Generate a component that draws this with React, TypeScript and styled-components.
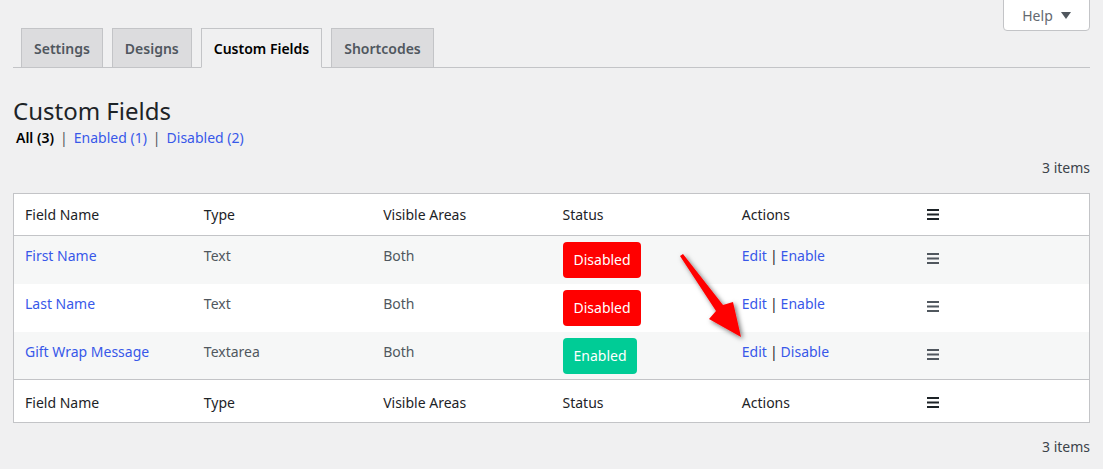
import React from "react";
import styled, { createGlobalStyle } from "styled-components";

const GlobalStyle = createGlobalStyle`
  body {
    margin: 0;
    background: #f0f0f1;
    font-family: "Noto Sans", "Open Sans", sans-serif;
    color: #3c434a;
    font-size: 14px;
  }
`;

const Page = styled.div`
  position: relative;
  padding: 0 13px;
  height: 469px;
  overflow: hidden;
`;

const TopBar = styled.div`
  display: flex;
  justify-content: flex-end;
  height: 28px;
`;

const HelpButton = styled.button`
  height: 32px;
  margin-top: -1px;
  width: 87px;
  background: #fff;
  border: 1px solid #c3c4c7;
  border-radius: 0 0 4px 4px;
  font-family: inherit;
  font-size: 14px;
  color: #646970;
  display: flex;
  align-items: center;
  justify-content: center;
  gap: 8px;
  padding: 0;
`;

const Caret = styled.span`
  display: inline-block;
  width: 0;
  height: 0;
  border-left: 5px solid transparent;
  border-right: 5px solid transparent;
  border-top: 7px solid #50575e;
`;

const TabBar = styled.div`
  display: flex;
  gap: 9px;
  padding-left: 8px;
  border-bottom: 1px solid #c3c4c7;
  height: 39px;
`;

const Tab = styled.div<{ $active?: boolean }>`
  box-sizing: border-box;
  padding: 0 12px;
  display: flex;
  align-items: center;
  font-size: 14px;
  font-weight: 600;
  border: 1px solid #c3c4c7;
  border-bottom: ${({ $active }) => ($active ? "1px solid #f0f0f1" : "none")};
  background: ${({ $active }) => ($active ? "#f0f0f1" : "#dcdcde")};
  color: ${({ $active }) => ($active ? "#000" : "#50575e")};
  height: ${({ $active }) => ($active ? "40px" : "39px")};
`;

const Title = styled.h1`
  margin: 28px 0 0 0;
  font-size: 24px;
  font-weight: 400;
  line-height: 29px;
  color: #1d2327;
`;

const Filters = styled.div`
  margin-top: 4px;
  font-size: 14px;
  line-height: 18px;
  padding-left: 3px;
`;

const FilterLink = styled.a<{ $current?: boolean }>`
  color: ${({ $current }) => ($current ? "#000" : "#3858e9")};
  font-weight: ${({ $current }) => ($current ? 600 : 400)};
  text-decoration: none;
`;

const Sep = styled.span`
  margin: 0 6px;
  color: #50575e;
`;

const Count = styled.div<{ $top: number; $bottom?: number }>`
  text-align: right;
  font-size: 14px;
  line-height: 20px;
  color: #3c434a;
  margin: ${({ $top, $bottom }) => `${$top}px 0 ${$bottom ?? 0}px`};
`;

const Table = styled.table`
  width: 100%;
  border-collapse: collapse;
  table-layout: fixed;
  background: #fff;
  border: 1px solid #c3c4c7;
`;

const HeadCell = styled.th<{ $foot?: boolean }>`
  text-align: left;
  font-weight: 400;
  color: #1d2327;
  font-size: 14px;
  height: ${({ $foot }) => ($foot ? "43px" : "42px")};
  box-sizing: border-box;
  padding: ${({ $foot }) => ($foot ? "2px 11px 0" : "0 11px")};
  vertical-align: middle;
  border-bottom: ${({ $foot }) => ($foot ? "none" : "1px solid #c3c4c7")};
  border-top: ${({ $foot }) => ($foot ? "1px solid #c3c4c7" : "none")};
`;

const Row = styled.tr<{ $striped?: boolean }>`
  background: ${({ $striped }) => ($striped ? "#f6f7f7" : "#fff")};
  height: 48px;
`;

const Cell = styled.td<{ $top?: number }>`
  vertical-align: top;
  padding: ${({ $top }) => `${$top ?? 10}px 11px 0`};
  font-size: 14px;
  line-height: 20px;
  color: #50575e;
`;

const NameLink = styled.a`
  color: #3858e9;
  text-decoration: none;
`;

const Badge = styled.span<{ $on?: boolean }>`
  display: inline-block;
  margin-left: 1px;
  background: ${({ $on }) => ($on ? "#00cc96" : "#ff0000")};
  color: #fff;
  border-radius: 4px;
  padding: 8px 10px;
  line-height: 20px;
  font-size: 14px;
`;

const ActionSep = styled.span`
  color: #1d2327;
  margin: 0 3px;
`;

const Arrow = styled.svg`
  position: absolute;
  left: 0;
  top: 0;
  pointer-events: none;
`;

const MenuSvg = styled.svg`
  display: block;
  margin-left: 6px;
`;

const MenuIcon: React.FC<{ dark?: boolean }> = ({ dark }) => (
  <MenuSvg width="12" height="11" viewBox="0 0 12 11">
    <g fill={dark ? "#1d2327" : "#50575e"}>
      <rect x="0" y="0" width="12" height="2" />
      <rect x="0" y="4.5" width="12" height="2" />
      <rect x="0" y="9" width="12" height="2" />
    </g>
  </MenuSvg>
);

const rows = [
  { name: "First Name", type: "Text", on: false },
  { name: "Last Name", type: "Text", on: false },
  { name: "Gift Wrap Message", type: "Textarea", on: true },
];

const HeaderCells: React.FC<{ foot?: boolean }> = ({ foot }) => (
  <tr>
    <HeadCell $foot={foot}>Field Name</HeadCell>
    <HeadCell $foot={foot}>Type</HeadCell>
    <HeadCell $foot={foot}>Visible Areas</HeadCell>
    <HeadCell $foot={foot}>Status</HeadCell>
    <HeadCell $foot={foot}>Actions</HeadCell>
    <HeadCell $foot={foot}>
      <MenuIcon dark />
    </HeadCell>
  </tr>
);

export default function App() {
  return (
    <Page>
      <GlobalStyle />
      <TopBar>
        <HelpButton>
          Help <Caret />
        </HelpButton>
      </TopBar>
      <TabBar>
        <Tab>Settings</Tab>
        <Tab>Designs</Tab>
        <Tab $active>Custom Fields</Tab>
        <Tab>Shortcodes</Tab>
      </TabBar>
      <Title>Custom Fields</Title>
      <Filters>
        <FilterLink $current>All (3)</FilterLink>
        <Sep>|</Sep>
        <FilterLink>Enabled (1)</FilterLink>
        <Sep>|</Sep>
        <FilterLink>Disabled (2)</FilterLink>
      </Filters>
      <Count $top={11} $bottom={15}>3 items</Count>
      <Table>
        <thead>
          <HeaderCells />
        </thead>
        <tbody>
          {rows.map((r, i) => (
            <Row key={r.name} $striped={i % 2 === 0}>
              <Cell>
                <NameLink>{r.name}</NameLink>
              </Cell>
              <Cell>{r.type}</Cell>
              <Cell>Both</Cell>
              <Cell $top={6}>
                <Badge $on={r.on}>{r.on ? "Enabled" : "Disabled"}</Badge>
              </Cell>
              <Cell>
                <NameLink>Edit</NameLink>
                <ActionSep>|</ActionSep>
                <NameLink>{r.on ? "Disable" : "Enable"}</NameLink>
              </Cell>
              <Cell $top={17}>
                <MenuIcon />
              </Cell>
            </Row>
          ))}
        </tbody>
        <tfoot>
          <HeaderCells foot />
        </tfoot>
      </Table>
      <Count $top={14}>3 items</Count>
      <Arrow width="1103" height="469" viewBox="0 0 1103 469">
        <defs>
          <filter id="sh" x="-50%" y="-50%" width="200%" height="200%">
            <feDropShadow dx="2" dy="2" stdDeviation="2.5" floodColor="#000" floodOpacity="0.55" />
          </filter>
        </defs>
        <polygon
          points="680,256 683,254 723,305 733,302 741,337 709,319 716,311"
          fill="#ff0000"
          filter="url(#sh)"
        />
      </Arrow>
    </Page>
  );
}
